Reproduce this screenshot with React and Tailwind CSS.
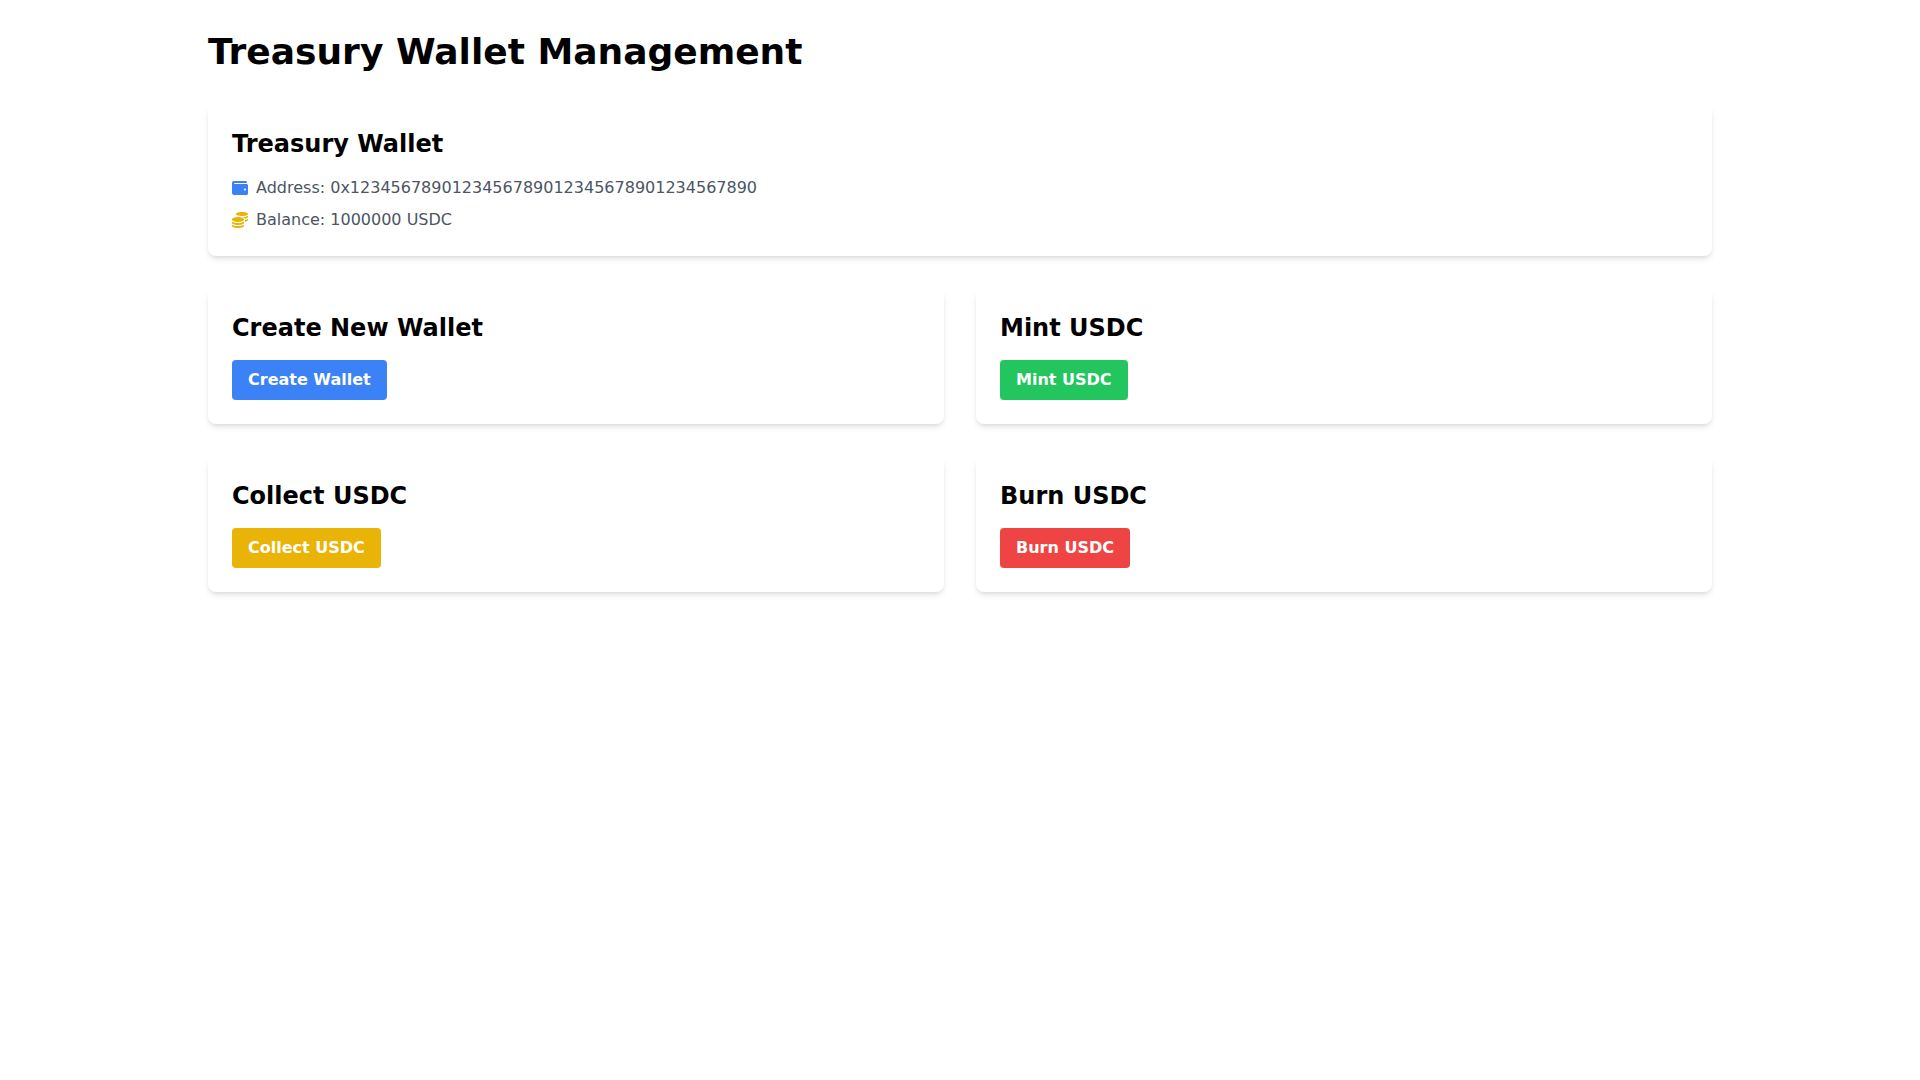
import React from "react";
import { FaWallet, FaCoins } from "react-icons/fa";

function ActionCard({ title, label, color }) {
  return (
    <div className="bg-white rounded-lg shadow-md p-6">
      <h2 className="text-2xl font-bold mb-4">{title}</h2>
      <button className={`${color} text-white font-bold py-2 px-4 rounded`}>{label}</button>
    </div>
  );
}

export default function App() {
  return (
    <div className="min-h-screen bg-white text-black font-['DejaVu_Sans',sans-serif]">
      <div className="container mx-auto px-4 py-8">
        <h1 className="text-4xl font-bold mb-8">Treasury Wallet Management</h1>
        <div className="bg-white rounded-lg shadow-md p-6 mb-8">
          <h2 className="text-2xl font-bold mb-4">Treasury Wallet</h2>
          <div className="flex items-center mb-2 text-[#4b5563]">
            <FaWallet className="text-[#3b82f6] mr-2" />
            <span>Address: 0x1234567890123456789012345678901234567890</span>
          </div>
          <div className="flex items-center text-[#4b5563]">
            <FaCoins className="text-[#eab308] mr-2" />
            <span>Balance: 1000000 USDC</span>
          </div>
        </div>
        <div className="grid grid-cols-2 gap-8">
          <ActionCard title="Create New Wallet" label="Create Wallet" color="bg-[#3b82f6]" />
          <ActionCard title="Mint USDC" label="Mint USDC" color="bg-[#22c55e]" />
          <ActionCard title="Collect USDC" label="Collect USDC" color="bg-[#eab308]" />
          <ActionCard title="Burn USDC" label="Burn USDC" color="bg-[#ef4444]" />
        </div>
      </div>
    </div>
  );
}
